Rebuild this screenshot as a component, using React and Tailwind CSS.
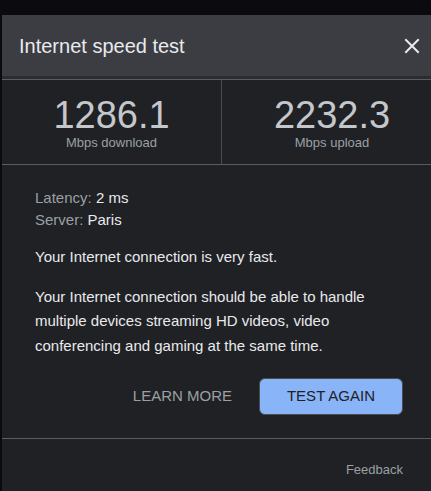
const font = { fontFamily: '"Liberation Sans", Arial, sans-serif' };

function CloseIcon() {
  return (
    <svg width="16" height="16" viewBox="0 0 16 16" fill="none">
      <path
        d="M2 2L14 14M14 2L2 14"
        stroke="#e8eaed"
        strokeWidth="2"
        strokeLinecap="square"
      />
    </svg>
  );
}

function Stat({ value, label, divider }) {
  return (
    <div
      className={
        "flex flex-col items-center pt-[15px] pb-[14px] " +
        (divider ? "border-r border-[#4a4b50]" : "")
      }
    >
      <div className="text-[38px] leading-[40px] text-[#c4c7cc]">{value}</div>
      <div className="text-[13px] leading-[15px] text-[#9aa0a6]">{label}</div>
    </div>
  );
}

export default function App() {
  return (
    <div
      className="w-[431px] h-[491px] overflow-hidden bg-[#0a0a0f] pt-[15px] pl-[2px]"
      style={font}
    >
      <div className="w-[440px] h-[476px] bg-[#202124] flex flex-col">
        <div className="h-[61px] bg-[#3c3d42] flex items-center justify-between pl-[17px] pr-[20px]">
          <h1 className="text-[20px] text-[#e8eaed]">Internet speed test</h1>
          <button className="flex items-center justify-center w-[20px] h-[20px]">
            <CloseIcon />
          </button>
        </div>
        <div className="h-[3px] bg-[#2b2c30]" />
        <div className="grid grid-cols-2 border-t border-b border-[#5a5c61]">
          <Stat value="1286.1" label="Mbps download" divider />
          <Stat value="2232.3" label="Mbps upload" />
        </div>
        <div className="pl-[33px] pr-[39px] pt-[22px] text-[15px]">
          <div className="leading-[22px]">
            <div>
              <span className="text-[#9aa0a6]">Latency: </span>
              <span className="text-[#e8eaed]">2 ms</span>
            </div>
            <div>
              <span className="text-[#9aa0a6]">Server: </span>
              <span className="text-[#e8eaed]">Paris</span>
            </div>
          </div>
          <p className="mt-[14px] leading-[24.5px] text-[#e8eaed]">
            Your Internet connection is very fast.
          </p>
          <p className="mt-[15px] leading-[24.5px] text-[#e8eaed]">
            Your Internet connection should be able to handle multiple devices
            streaming HD videos, video conferencing and gaming at the same time.
          </p>
          <div className="mt-[20px] flex items-center justify-end gap-[27px]">
            <button className="text-[15px] text-[#9aa0a6] uppercase">
              Learn more
            </button>
            <button className="w-[144px] h-[37px] rounded-[6px] bg-[#8ab4f8] border border-[#4a4c50] text-[15px] text-[#202124] uppercase">
              Test again
            </button>
          </div>
        </div>
        <div className="mt-[23px] border-t border-[#5a5c61] pr-[39px] pt-[23px] flex justify-end">
          <span className="text-[13px] leading-[16px] text-[#9aa0a6]">Feedback</span>
        </div>
      </div>
    </div>
  );
}
